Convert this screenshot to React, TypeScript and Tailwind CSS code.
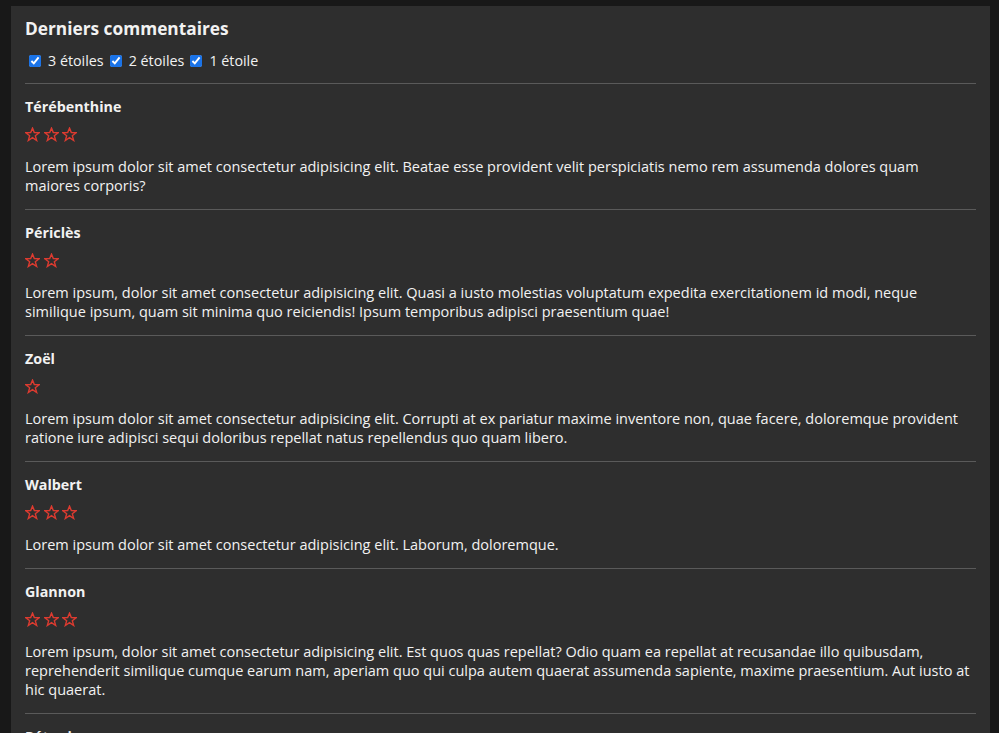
import React from "react"

const comments = [
  {
    name: "Térébenthine",
    stars: 3,
    text: "Lorem ipsum dolor sit amet consectetur adipisicing elit. Beatae esse provident velit perspiciatis nemo rem assumenda dolores quam maiores corporis?",
  },
  {
    name: "Périclès",
    stars: 2,
    text: "Lorem ipsum, dolor sit amet consectetur adipisicing elit. Quasi a iusto molestias voluptatum expedita exercitationem id modi, neque similique ipsum, quam sit minima quo reiciendis! Ipsum temporibus adipisci praesentium quae!",
  },
  {
    name: "Zoël",
    stars: 1,
    text: "Lorem ipsum dolor sit amet consectetur adipisicing elit. Corrupti at ex pariatur maxime inventore non, quae facere, doloremque provident ratione iure adipisci sequi doloribus repellat natus repellendus quo quam libero.",
  },
  {
    name: "Walbert",
    stars: 3,
    text: "Lorem ipsum dolor sit amet consectetur adipisicing elit. Laborum, doloremque.",
  },
  {
    name: "Glannon",
    stars: 3,
    text: "Lorem ipsum, dolor sit amet consectetur adipisicing elit. Est quos quas repellat? Odio quam ea repellat at recusandae illo quibusdam, reprehenderit similique cumque earum nam, aperiam quo qui culpa autem quaerat assumenda sapiente, maxime praesentium. Aut iusto at hic quaerat.",
  },
  {
    name: "Pétunia",
    stars: 2,
    text: "Lorem ipsum dolor sit amet consectetur adipisicing elit. Quisquam, voluptates.",
  },
]

function Star() {
  return (
    <svg width="15" height="15" viewBox="0 0 24 24" fill="none" stroke="#dc3b30" strokeWidth="2.2" strokeLinejoin="miter">
      <polygon points="12,1.8 14.9,9 22.6,9.2 16.5,13.9 18.7,21.6 12,17.1 5.3,21.6 7.5,13.9 1.4,9.2 9.1,9" />
    </svg>
  )
}

export default function App() {
  const filters = ["3 étoiles", "2 étoiles", "1 étoile"]

  return (
    <div className="h-[733px] overflow-hidden bg-[#181818] pt-[6px] pl-[11px] pr-[9px] font-['Open_Sans',sans-serif] text-[#f2f2f2]">
      <div className="bg-[#2e2e2e] px-[14px] pt-[12px] min-h-[800px]">
        <h2 className="text-[17.3px] font-bold leading-[21px]">Derniers commentaires</h2>

        <div className="mt-[12px] flex items-center text-[14.3px] leading-[20px] pl-[4px]">
          {filters.map((f) => (
            <label key={f} className="flex items-center mr-[6px]">
              <input type="checkbox" defaultChecked className="w-[12px] h-[12px] mr-[7px] accent-[#1a73e8]" />
              {f}
            </label>
          ))}
        </div>

        <div className="mt-[12px]">
          {comments.map((c) => (
            <div key={c.name} className="border-t border-[#5a5a5a] pt-[13px] pb-[14px]">
              <div className="text-[14.3px] font-bold leading-[19px]">{c.name}</div>
              <div className="mt-[11px] flex gap-[3.5px] h-[15px]">
                {Array.from({ length: c.stars }).map((_, i) => (
                  <Star key={i} />
                ))}
              </div>
              <p className="mt-[15px] text-[14.5px] leading-[19px]">{c.text}</p>
            </div>
          ))}
        </div>
      </div>
    </div>
  )
}
